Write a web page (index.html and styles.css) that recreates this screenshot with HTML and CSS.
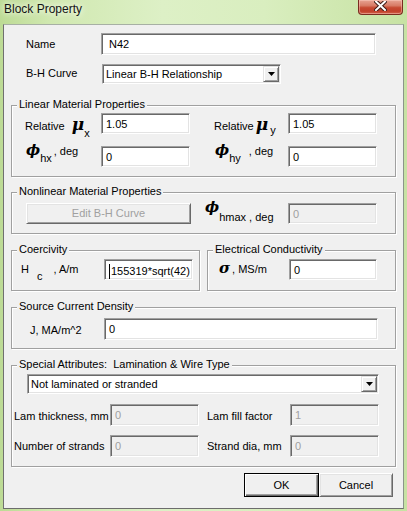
FILE: index.html
```html
<!DOCTYPE html>
<html lang="en">
<head>
<meta charset="utf-8">
<title>Block Property</title>
<link rel="stylesheet" href="styles.css">
</head>
<body>
<div class="window">
  <div class="titlebar">
    <span class="title">Block Property</span>
    <span class="close">
      <svg width="13" height="10" viewBox="0 0 13 10">
        <path d="M2 0.5 L11 9 M11 0.5 L2 9" stroke="#3b1a14" stroke-width="4" stroke-linecap="square"/>
        <path d="M2 0.5 L11 9 M11 0.5 L2 9" stroke="#ffffff" stroke-width="2" stroke-linecap="square"/>
      </svg>
    </span>
  </div>

  <div class="client">
    <div class="row name-row">
      <span class="lbl name-lbl">Name</span>
      <div class="edit name-edit">N42</div>
    </div>

    <div class="row bh-row">
      <span class="lbl bh-lbl">B-H Curve</span>
      <div class="combo bh-combo">
        <span class="combo-text">Linear B-H Relationship</span>
        <span class="drop"><svg width="7" height="4" viewBox="0 0 7 4"><path d="M0 0H7L3.5 4Z" fill="#000"/></svg></span>
      </div>
    </div>

    <div class="group linear">
      <div class="legend">Linear Material Properties</div>
      <div class="mat-grid">
        <span class="lbl rel">Relative<b class="sym mu mu-x">μ</b><sub class="sub-x">x</sub></span>
        <div class="edit num">1.05</div>
        <span class="lbl rel">Relative<b class="sym mu mu-y">μ</b><sub class="sub-y">y</sub></span>
        <div class="edit num">1.05</div>
        <span class="lbl ang"><b class="sym phi">ϕ</b><sub class="sub-h">hx</sub><span class="deg-x">, deg</span></span>
        <div class="edit num">0</div>
        <span class="lbl ang"><b class="sym phi">ϕ</b><sub class="sub-h">hy</sub><span class="deg-y">, deg</span></span>
        <div class="edit num">0</div>
      </div>
    </div>

    <div class="group nonlinear">
      <div class="legend">Nonlinear Material Properties</div>
      <div class="row nl-row">
        <div class="btn btn-off bh-btn">Edit B-H Curve</div>
        <span class="lbl hmax"><b class="sym phi">ϕ</b><sub class="sub-hmax">hmax , deg</sub></span>
        <div class="edit num off">0</div>
      </div>
    </div>

    <div class="pair">
      <div class="group coerc">
        <div class="legend">Coercivity</div>
        <div class="row">
          <span class="lbl hc">H<sub class="sub-c">c</sub><span class="am">, A/m</span></span>
          <div class="edit num hc-edit"><span class="caret"></span>155319*sqrt(42)</div>
        </div>
      </div>
      <div class="group cond">
        <div class="legend">Electrical Conductivity</div>
        <div class="row">
          <span class="lbl sig"><b class="sym sigma">σ</b><span class="ms">, MS/m</span></span>
          <div class="edit num cond-edit">0</div>
        </div>
      </div>
    </div>

    <div class="group source">
      <div class="legend">Source Current Density</div>
      <div class="row">
        <span class="lbl j-lbl">J, MA/m^2</span>
        <div class="edit j-edit">0</div>
      </div>
    </div>

    <div class="group special">
      <div class="legend">Special Attributes:&nbsp; Lamination &amp; Wire Type</div>
      <div class="combo lam-combo">
        <span class="combo-text">Not laminated or stranded</span>
        <span class="drop"><svg width="7" height="4" viewBox="0 0 7 4"><path d="M0 0H7L3.5 4Z" fill="#000"/></svg></span>
      </div>
      <div class="lam-grid">
        <span class="lbl lam-lbl">Lam thickness, mm</span>
        <div class="edit lam off">0</div>
        <span class="lbl lam-lbl">Lam fill factor</span>
        <div class="edit lam off">1</div>
        <span class="lbl lam-lbl second">Number of strands</span>
        <div class="edit lam off">0</div>
        <span class="lbl lam-lbl second">Strand dia, mm</span>
        <div class="edit lam off">0</div>
      </div>
    </div>

    <div class="actions">
      <div class="btn btn-default ok">OK</div>
      <div class="btn cancel">Cancel</div>
    </div>
  </div>
</div>
</body>
</html>
```

FILE: styles.css
```css
* {
  box-sizing: border-box;
}

html,
body {
  margin: 0;
  padding: 0;
}

body {
  width: 407px;
  height: 511px;
  overflow: hidden;
  font-family: "Liberation Sans", Arial, sans-serif;
  font-size: 11px;
  line-height: 13px;
  color: #000;
  background: linear-gradient(90deg, #bddb95 0%, #d0e8b0 12%, #ddf0c6 40%, #d9eebf 65%, #c7e2a3 100%);
}

/* ---- window frame ---- */
.window {
  width: 407px;
  height: 511px;
  display: flex;
  flex-direction: column;
}

.titlebar {
  height: 24px;
  display: flex;
  justify-content: space-between;
  align-items: flex-start;
}

.title {
  padding: 2px 0 0 4px;
  font-size: 12px;
  line-height: 14px;
  color: #141414;
  text-shadow: 0 0 5px #f2faea, 0 0 8px #f2faea;
}

.close {
  width: 45px;
  height: 15px;
  margin-right: 4px;
  border: 1px solid #7a2c20;
  border-top: 0;
  border-radius: 0 0 4px 4px;
  background: linear-gradient(#e7a493 0%, #d87b66 40%, #c64a32 55%, #c2402b 80%, #d0654c 100%);
  box-shadow: inset 0 0 0 1px rgba(255, 210, 200, 0.45);
  display: flex;
  justify-content: center;
  padding-top: 1px;
}

.client {
  margin-left: 3px;
  width: 401px;
  height: 485px;
  border: 1px solid;
  border-color: #a7b0a4 #8c948a #6c6c6c #707070;
  background: #f0f0f0;
}

/* ---- generic controls ---- */
.row {
  display: flex;
  align-items: flex-start;
}

.lbl {
  display: block;
  white-space: nowrap;
}

.sym {
  font-family: "DejaVu Serif", serif;
  font-weight: bold;
  font-style: italic;
  line-height: 0;
}

.mu {
  font-size: 17px;
}

.phi {
  font-size: 15px;
}

.sigma {
  font-size: 15px;
}

sub {
  font-size: 11px;
  line-height: 0;
  vertical-align: -7px;
}

.edit {
  height: 21px;
  border: 1px solid;
  border-color: #a0a0a0 #ffffff #ffffff #a0a0a0;
  box-shadow: inset 1px 1px 0 #696969, inset -1px -1px 0 #e3e3e3;
  background: #fff;
  padding: 4px 0 0 4px;
  white-space: nowrap;
  overflow: hidden;
}

.edit.off {
  background: #f0f0f0;
  color: #a0a0a0;
}

.num {
  width: 89px;
}

.caret {
  display: inline-block;
  width: 1px;
  height: 15px;
  margin-right: 1px;
  background: #000;
  vertical-align: -4px;
}

.combo {
  display: flex;
  justify-content: space-between;
  height: 20px;
  border: 1px solid;
  border-color: #a0a0a0 #ffffff #ffffff #a0a0a0;
  box-shadow: inset 1px 1px 0 #696969, inset -1px -1px 0 #e3e3e3;
  background: #fff;
  padding: 1px 1px 1px 3px;
}

.combo-text {
  padding-top: 2px;
}

.drop {
  width: 16px;
  height: 16px;
  border: 1px solid;
  border-color: #e3e3e3 #696969 #696969 #e3e3e3;
  box-shadow: inset 1px 1px 0 #fff, inset -1px -1px 0 #a0a0a0;
  background: #f0f0f0;
  display: flex;
  align-items: center;
  justify-content: center;
}

.btn {
  display: flex;
  align-items: center;
  justify-content: center;
  border: 1px solid;
  border-color: #ffffff #696969 #696969 #ffffff;
  box-shadow: inset 1px 1px 0 #e3e3e3, inset -1px -1px 0 #a0a0a0;
  background: #f0f0f0;
}

.btn-off {
  color: #a0a0a0;
}

.btn-default {
  border-color: #000;
  box-shadow: inset 1px 1px 0 #fff, inset -1px -1px 0 #696969, inset -2px -2px 0 #a0a0a0;
}

/* ---- group boxes ---- */
.group {
  margin-left: 7px;
  width: 385px;
  border: 1px solid #a0a0a0;
  box-shadow: inset 1px 1px 0 #fff, 1px 1px 0 #fff;
}

.legend {
  width: fit-content;
  margin: -8px 0 0 5px;
  padding: 0 2px;
  background: #f0f0f0;
}

/* ---- name / curve rows ---- */
.name-row {
  margin-top: 8px;
  padding-left: 22px;
}

.name-lbl {
  width: 75px;
  margin-top: 5px;
}

.name-edit {
  width: 275px;
  height: 22px;
  padding-left: 7px;
}

.bh-row {
  margin-top: 9px;
  padding-left: 22px;
}

.bh-lbl {
  width: 76px;
  margin-top: 3px;
}

.bh-combo {
  width: 179px;
}

/* ---- linear material ---- */
.linear {
  margin-top: 21px;
  padding-bottom: 9px;
}

.mat-grid {
  display: grid;
  grid-template-columns: 76px 113px 74px 89px;
  grid-auto-rows: 21px;
  row-gap: 12px;
  margin-top: 2px;
  padding-left: 13px;
}

.rel {
  margin-top: 7px;
}

.mu-x {
  margin-left: 7px;
}

.mu-y {
  margin-left: 2px;
}

.sub-y {
  margin-left: 2px;
  vertical-align: -4px;
}

.ang {
  margin-top: -1px;
  padding-left: 1px;
}

.deg-x {
  margin-left: 2px;
}

.deg-y {
  margin-left: 8px;
}

/* ---- nonlinear ---- */
.nonlinear {
  margin-top: 15px;
  padding-bottom: 9px;
}

.nl-row {
  margin-top: 5px;
  padding-left: 14px;
}

.bh-btn {
  width: 165px;
  height: 21px;
}

.hmax {
  width: 83px;
  margin: -1px 0 0 14px;
}

.sub-hmax {
  vertical-align: -9px;
}

/* ---- coercivity / conductivity ---- */
.pair {
  display: grid;
  grid-template-columns: 189px 189px;
  column-gap: 7px;
  width: 385px;
  margin: 16px 0 0 7px;
}

.pair .group {
  width: auto;
  margin-left: 0;
  padding-bottom: 10px;
}

.pair .row {
  margin-top: 3px;
}

.hc {
  width: 92px;
  margin-top: 4px;
  padding-left: 9px;
}

.sub-c {
  margin-left: 8px;
}

.am {
  margin-left: 11px;
}

.sig {
  width: 81px;
  margin-top: 4px;
  padding-left: 11px;
}

.ms {
  margin-left: 2px;
}

.cond-edit {
  width: 88px;
}

/* ---- source current ---- */
.source {
  margin-top: 16px;
  padding-bottom: 8px;
}

.source .row {
  margin-top: 5px;
  padding-left: 18px;
}

.j-lbl {
  width: 74px;
  margin-top: 6px;
}

.j-edit {
  width: 274px;
  height: 22px;
}

/* ---- lamination ---- */
.special {
  margin-top: 16px;
  padding-bottom: 9px;
}

.lam-combo {
  width: 352px;
  margin: 3px 0 0 15px;
}

.lam-grid {
  display: grid;
  grid-template-columns: 96px 97px 83px 89px;
  grid-auto-rows: 22px;
  row-gap: 9px;
  margin-top: 10px;
  padding-left: 2px;
}

.lam-lbl {
  margin-top: 6px;
}

.lam-lbl.second {
  margin-top: 5px;
}

.lam {
  width: 89px;
  height: 22px;
}

/* ---- dialog buttons ---- */
.actions {
  display: flex;
  justify-content: flex-end;
  margin: 6px 10px 0 0;
}

.actions .btn {
  height: 24px;
}

.ok {
  width: 75px;
}

.cancel {
  width: 74px;
}
```
